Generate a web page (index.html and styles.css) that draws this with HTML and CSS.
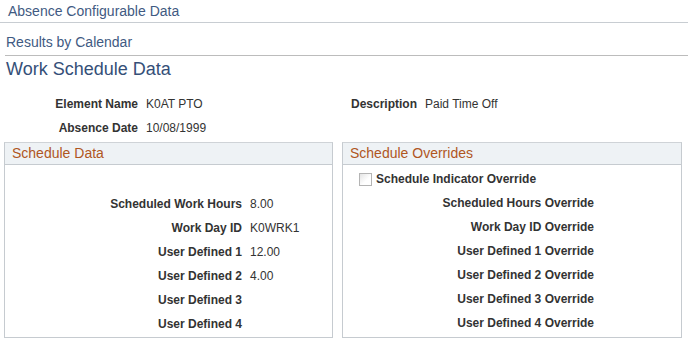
FILE: index.html
```html
<!DOCTYPE html>
<html lang="en">
<head>
    <meta charset="UTF-8">
    <title>Absence Configurable Data</title>
    <link rel="stylesheet" href="styles.css">
</head>
<body>
    <div class="pagebar">Absence Configurable Data</div>
    <div class="subbar">Results by Calendar</div>
    <h1 class="title">Work Schedule Data</h1>

    <div class="fields">
        <div class="lbl">Element Name</div>
        <div class="val">K0AT PTO</div>
        <div class="lbl">Description</div>
        <div class="val">Paid Time Off</div>
        <div class="lbl">Absence Date</div>
        <div class="val">10/08/1999</div>
    </div>

    <div class="panels">
        <div class="panel left">
            <div class="panel-head">Schedule Data</div>
            <div class="panel-body">
                <div class="row"><span class="lbl">Scheduled Work Hours</span><span class="val">8.00</span></div>
                <div class="row"><span class="lbl">Work Day ID</span><span class="val">K0WRK1</span></div>
                <div class="row"><span class="lbl">User Defined 1</span><span class="val">12.00</span></div>
                <div class="row"><span class="lbl">User Defined 2</span><span class="val">4.00</span></div>
                <div class="row"><span class="lbl">User Defined 3</span><span class="val"></span></div>
                <div class="row"><span class="lbl">User Defined 4</span><span class="val"></span></div>
            </div>
        </div>
        <div class="panel right">
            <div class="panel-head">Schedule Overrides</div>
            <div class="panel-body">
                <label class="check"><span class="box"></span>Schedule Indicator Override</label>
                <div class="row"><span class="lbl">Scheduled Hours Override</span></div>
                <div class="row"><span class="lbl">Work Day ID Override</span></div>
                <div class="row"><span class="lbl">User Defined 1 Override</span></div>
                <div class="row"><span class="lbl">User Defined 2 Override</span></div>
                <div class="row"><span class="lbl">User Defined 3 Override</span></div>
                <div class="row"><span class="lbl">User Defined 4 Override</span></div>
            </div>
        </div>
    </div>
</body>
</html>
```

FILE: styles.css
```css
body {
    font-family: "Liberation Sans", Arial, sans-serif;
    font-size: 12px;
    color: #333;
    margin: 0;
    background: #fff;
}
.pagebar {
    font-size: 14px;
    line-height: 18px;
    color: #3f5a82;
    padding: 2px 8px 2px;
    border-bottom: 1px solid #c8cdd2;
}
.subbar {
    font-size: 14px;
    line-height: 18px;
    color: #3f5a82;
    margin-left: 5px;
    padding: 10px 1px 4px;
    border-bottom: 1px solid #bcbcbc;
}
.title {
    font-size: 18px;
    font-weight: normal;
    line-height: 22px;
    color: #354f78;
    margin: 2px 0 0 6px;
}
.fields {
    display: grid;
    grid-template-columns: 134px 124px 139px 1fr;
    grid-auto-rows: 24px;
    column-gap: 8px;
    align-items: center;
    padding-left: 4px;
    margin-top: 12px;
}
.lbl {
    font-weight: bold;
    text-align: right;
    color: #333;
}
.val {
    color: #333;
}
.panels {
    display: flex;
    gap: 9px;
    padding-left: 4px;
    margin-top: 2px;
}
.panel {
    box-sizing: border-box;
    border: 1px solid #c6cbd0;
    border-top-color: #cfd3d7;
}
.panel.left {
    width: 329px;
}
.panel.right {
    width: 340px;
}
.panel-head {
    background: #eef2f5;
    border-bottom: 1px solid #c6cbd0;
    color: #b0561e;
    font-size: 14px;
    line-height: 21px;
    padding-left: 7px;
}
.panel-body {
    padding: 27px 0 1px;
}
.row {
    display: flex;
    height: 24px;
    align-items: center;
}
.left .row .lbl {
    width: 237px;
}
.left .row .val {
    margin-left: 8px;
}
.right .panel-body {
    padding-top: 2px;
}
.right .row .lbl {
    width: 251px;
}
.check {
    display: flex;
    align-items: center;
    height: 24px;
    font-weight: bold;
    padding-left: 16px;
}
.box {
    width: 11px;
    height: 11px;
    border: 1px solid #b4b4b4;
    background: linear-gradient(135deg, #e4e4e4, #fff 60%);
    margin-right: 4px;
}
```
